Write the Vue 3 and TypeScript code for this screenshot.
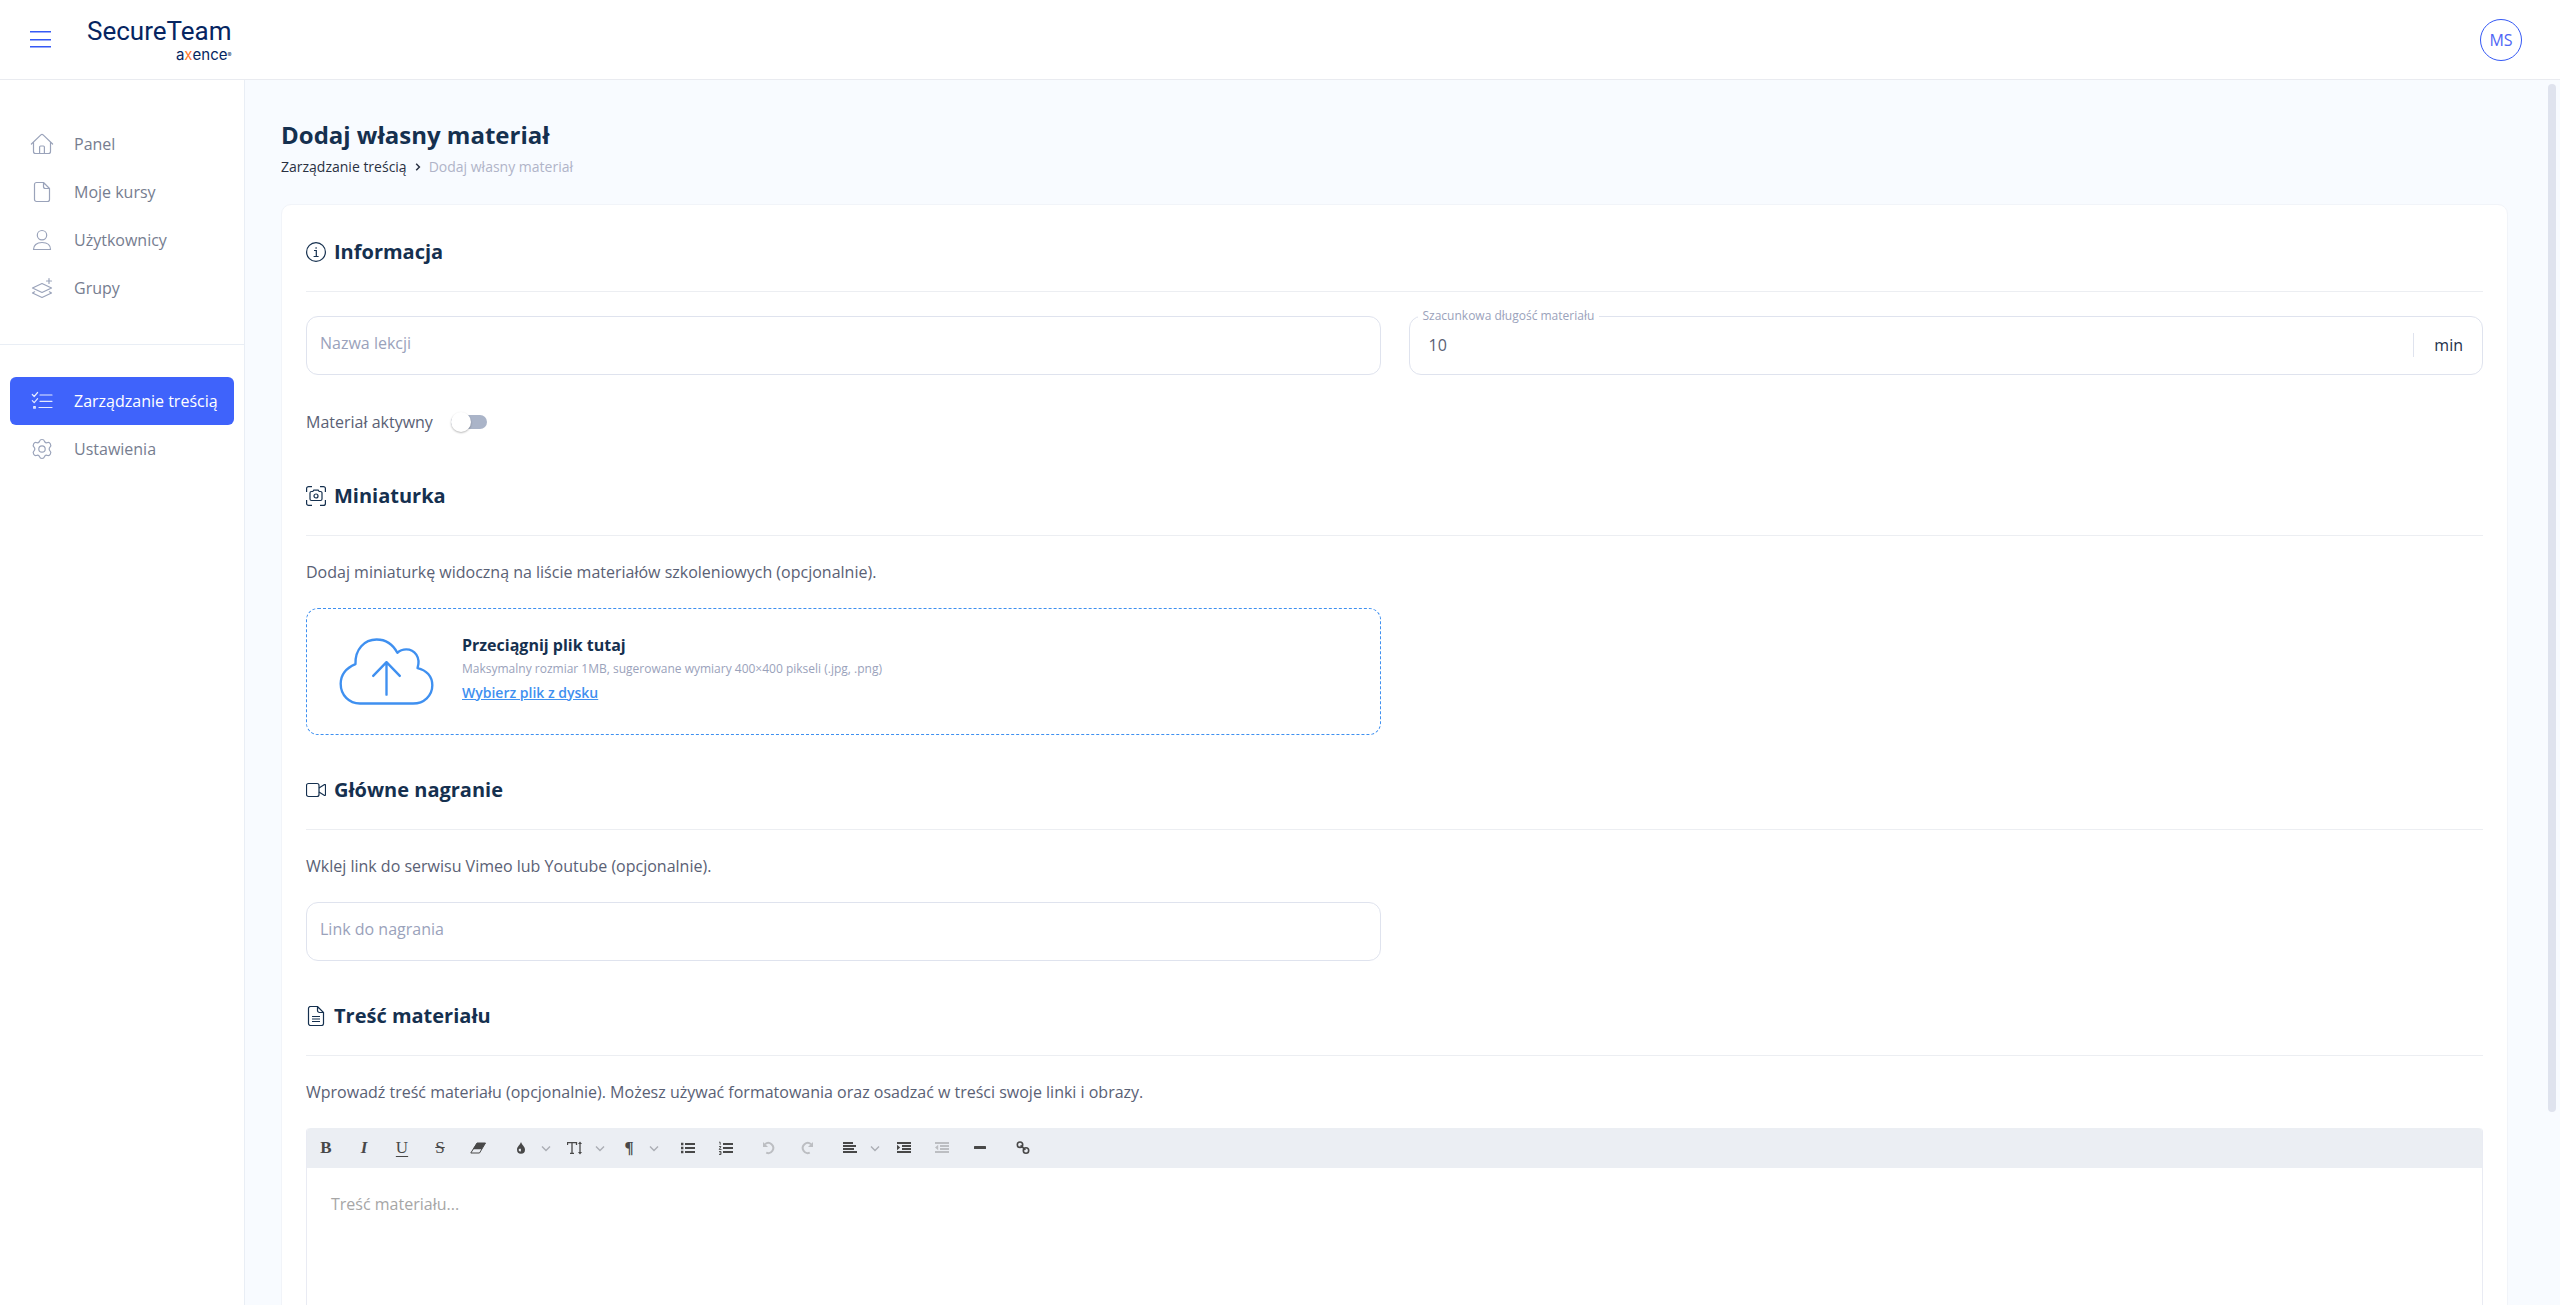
<script setup lang="ts">
import { ref } from 'vue'

interface NavItem {
  label: string
  icon: string
  active?: boolean
}

const mainNav: NavItem[] = [
  { label: 'Panel', icon: 'home' },
  { label: 'Moje kursy', icon: 'file' },
  { label: 'Użytkownicy', icon: 'user' },
  { label: 'Grupy', icon: 'layers' },
]

const adminNav: NavItem[] = [
  { label: 'Zarządzanie treścią', icon: 'checklist', active: true },
  { label: 'Ustawienia', icon: 'gear' },
]

const navIcons: Record<string, string> = {
  home: 'M1.4 12 10.9 2.9a1.6 1.6 0 0 1 2.2 0L22.6 12M3.5 10.2V19.5a2 2 0 0 0 2 2h13a2 2 0 0 0 2-2V10.2M9.6 21.5V15a1 1 0 0 1 1-1h2.8a1 1 0 0 1 1 1v6.5',
  file: 'M6.5 2.5h7l6 6v11a2 2 0 0 1-2 2h-11a2 2 0 0 1-2-2v-15a2 2 0 0 1 2-2zM13.5 2.5v4a2 2 0 0 0 2 2h4',
  user: 'M12 2.5a4.7 4.7 0 1 1 0 9.4a4.7 4.7 0 0 1 0-9.4zM3.5 21.5h17c0-4.2-3-7-8.500-7s-8.500 2.800-8.500 7z',
  layers: 'M12 7.500l9.500 4.500-9.500 4.500L2.500 12zM4.600 15.800 2.500 17l9.500 4.500 9.500-4.500-2.100-1.200M19 2.500v5M16.500 5h5',
  checklist: 'M10 6h12M10 12.300h12M9 18.500h13M2.300 5.500 4.200 7.500 7.600 3.500M2.300 11.700 4.200 13.700 7.600 9.700M3.700 17.600h1.600v1.600H3.700z',
  gear: 'M12 2.500C13.900 2.500 14.200 3.200 14.500 4.300 14.900 5.500 15.900 6 17 5.700 18.400 5.200 19.300 5 20.300 6.700 21.400 8.600 21 9.200 20 10.100 18.900 11.200 18.900 12.800 20 13.900 21 14.800 21.400 15.400 20.300 17.300 19.300 19 18.400 18.800 17 18.300 15.900 18 14.900 18.500 14.500 19.700 14.200 20.800 13.900 21.500 12 21.500S9.800 20.800 9.500 19.700C9.100 18.500 8.100 18 7 18.300 5.600 18.800 4.700 19 3.700 17.300 2.600 15.400 3 14.800 4 13.900 5.100 12.800 5.100 11.200 4 10.100 3 9.200 2.600 8.600 3.700 6.700 4.700 5 5.600 5.200 7 5.700 8.100 6 9.100 5.500 9.500 4.300 9.800 3.200 10.100 2.500 12 2.500zM12 8.800a3.200 3.200 0 1 1 0 6.400a3.200 3.200 0 0 1 0-6.400z',
}

interface Tool {
  name: string
  glyph: string
  letter?: string
  menu?: boolean
  disabled?: boolean
}

const toolGroups: Tool[][] = [
  [
    { name: 'Pogrubienie', letter: 'B', glyph: 'bold' },
    { name: 'Kursywa', letter: 'I', glyph: 'italic' },
    { name: 'Podkreślenie', letter: 'U', glyph: 'underline' },
    { name: 'Przekreślenie', letter: 'S', glyph: 'strike' },
    { name: 'Wyczyść formatowanie', glyph: 'eraser' },
  ],
  [
    { name: 'Kolor', glyph: 'drop', menu: true },
    { name: 'Rozmiar czcionki', glyph: 'size', menu: true },
    { name: 'Format akapitu', letter: '¶', glyph: 'para', menu: true },
  ],
  [
    { name: 'Lista punktowana', glyph: 'ul' },
    { name: 'Lista numerowana', glyph: 'ol' },
  ],
  [
    { name: 'Cofnij', glyph: 'undo', disabled: true },
    { name: 'Ponów', glyph: 'redo', disabled: true },
  ],
  [
    { name: 'Wyrównanie', glyph: 'align', menu: true },
    { name: 'Zwiększ wcięcie', glyph: 'indent' },
    { name: 'Zmniejsz wcięcie', glyph: 'outdent', disabled: true },
    { name: 'Linia pozioma', glyph: 'hr' },
  ],
  [{ name: 'Wstaw link', glyph: 'link' }],
]

const lessonName = ref('')
const duration = ref('10')
const isActive = ref(false)
const videoLink = ref('')
const content = ref('')
</script>

<template>
  <div class="app">
    <header class="topbar">
      <button class="menu-button" type="button" aria-label="Menu">
        <svg width="21" height="17" viewBox="0 0 21 17"><path d="M0 .7h21M0 8.700h21M0 15.700h21" stroke="currentColor" stroke-width="1.4" /></svg>
      </button>
      <a class="logo" href="#">
        <span class="logo-name">SecureTeam</span>
        <span class="logo-brand">a<b>x</b>ence<small>®</small></span>
      </a>
      <button class="avatar" type="button">MS</button>
    </header>

    <div class="body">
      <nav class="sidebar">
        <div class="nav-group">
          <a v-for="item in mainNav" :key="item.label" class="nav-item" href="#">
            <svg class="nav-icon" viewBox="0 0 24 24"><path :d="navIcons[item.icon]" /></svg>
            <span>{{ item.label }}</span>
          </a>
        </div>
        <div class="nav-group">
          <a v-for="item in adminNav" :key="item.label" class="nav-item" :class="{ active: item.active }" href="#">
            <svg class="nav-icon" viewBox="0 0 24 24"><path :d="navIcons[item.icon]" /></svg>
            <span>{{ item.label }}</span>
          </a>
        </div>
      </nav>

      <main class="main">
        <h1>Dodaj własny materiał</h1>
        <div class="crumbs">
          <a href="#">Zarządzanie treścią</a>
          <svg width="6" height="8" viewBox="0 0 6 8"><path d="M1.200.800 4.400 4 1.200 7.200" fill="none" stroke="currentColor" stroke-width="1.500" /></svg>
          <span>Dodaj własny materiał</span>
        </div>

        <form class="card" @submit.prevent>
          <section>
            <h2>
              <svg viewBox="0 0 20 20"><circle cx="10" cy="10" r="9.400" /><path d="M8 8.500h2.300v6M7.600 14.500h5M10.100 5.200v1.600" /></svg>
              Informacja
            </h2>
            <div class="columns">
              <input v-model="lessonName" class="field" type="text" placeholder="Nazwa lekcji" aria-label="Nazwa lekcji" />
              <div class="field duration">
                <label for="duration">Szacunkowa długość materiału</label>
                <input id="duration" v-model="duration" type="text" />
                <span class="unit">min</span>
              </div>
            </div>
            <div class="toggle-row">
              <label for="active">Materiał aktywny</label>
              <input id="active" v-model="isActive" class="switch" type="checkbox" role="switch" />
            </div>
          </section>

          <section>
            <h2>
              <svg viewBox="0 0 20 20"><path d="M.6 6V2.600a2 2 0 0 1 2-2H6M14 .6h3.400a2 2 0 0 1 2 2V6M19.400 14v3.400a2 2 0 0 1-2 2H14M6 19.400H2.600a2 2 0 0 1-2-2V14M5.500 5.500h1.300l1-1.400h4.400l1 1.400h1.300a1.500 1.500 0 0 1 1.500 1.500v6a1.500 1.500 0 0 1-1.500 1.500h-9A1.500 1.500 0 0 1 4 13V7a1.500 1.500 0 0 1 1.500-1.500z" /><circle cx="10" cy="10" r="2" /></svg>
              Miniaturka
            </h2>
            <p>Dodaj miniaturkę widoczną na liście materiałów szkoleniowych (opcjonalnie).</p>
            <div class="columns">
              <div class="dropzone">
                <svg class="cloud" viewBox="0 0 96 68"><path d="M21 66.500h54c11 0 19.500-8 19.500-18.500 0-9-6-15.500-15-17.500 3.500-11-3-19-11.500-19-4 0-6.500 1.200-9 3.500C54.500 6.500 47 1.500 38 1.500c-12.500 0-22 10-21.500 25C7 30.500 1.500 37 1.500 46.500c0 11.500 8.500 20 19.500 20zM48 57.500V24.500M34.500 38.500 48 24.500l13.500 14" /></svg>
                <div class="drop-text">
                  <strong>Przeciągnij plik tutaj</strong>
                  <small>Maksymalny rozmiar 1MB, sugerowane wymiary 400×400 pikseli (.jpg, .png)</small>
                  <a href="#">Wybierz plik z dysku</a>
                </div>
              </div>
            </div>
          </section>

          <section>
            <h2>
              <svg viewBox="0 0 20 20"><rect x=".5" y="3.500" width="12.500" height="13" rx="2" /><path d="M13 8l5.500-3.400a.7.700 0 0 1 1 .6v9.600a.7.700 0 0 1-1 .6L13 12" /></svg>
              Główne nagranie
            </h2>
            <p>Wklej link do serwisu Vimeo lub Youtube (opcjonalnie).</p>
            <div class="columns">
              <input v-model="videoLink" class="field" type="text" placeholder="Link do nagrania" aria-label="Link do nagrania" />
            </div>
          </section>

          <section>
            <h2>
              <svg viewBox="0 0 20 20"><path d="M4.500.500h7l6 6v11a2 2 0 0 1-2 2h-11a2 2 0 0 1-2-2v-15a2 2 0 0 1 2-2zM11.500.500v4a2 2 0 0 0 2 2h4M6 10.500h8M6 13h8M6 15.500h8" /></svg>
              Treść materiału
            </h2>
            <p>Wprowadź treść materiału (opcjonalnie). Możesz używać formatowania oraz osadzać w treści swoje linki i obrazy.</p>
            <div class="editor">
              <div class="toolbar" role="toolbar">
                <div v-for="(group, g) in toolGroups" :key="g" class="tool-group">
                  <template v-for="tool in group" :key="tool.name">
                    <button type="button" class="tool" :class="tool.glyph" :disabled="tool.disabled" :aria-label="tool.name">
                      <template v-if="tool.letter">{{ tool.letter }}</template>
                      <svg v-else viewBox="0 0 16 16">
                        <template v-if="tool.glyph === 'eraser'">
                          <path d="M7 3h8.500L9.500 13H.8z" fill="none" stroke="currentColor" />
                          <path d="M7 3h8.500L11.700 9.300H2.800z" fill="currentColor" />
                        </template>
                        <path v-else-if="tool.glyph === 'drop'" fill-rule="evenodd" d="M8 2c.9 3 4 4.400 4 7.800a4 4 0 0 1-8 0C4 6.400 7.100 5 8 2zM6.300 8.800a1.300 1.300 0 1 0 1.600 2.400V8.800z" fill="currentColor" />
                        <template v-else-if="tool.glyph === 'size'">
                          <path d="M.5 5V2.600h9V5M5 2.600v10.800M3 13.400h4" fill="none" stroke="currentColor" stroke-width="1.300" />
                          <path d="M13 3.500v9" stroke="currentColor" stroke-width="1.300" />
                          <path d="M13 1.500l2 2.600h-4zM13 14.500l2-2.600h-4z" fill="currentColor" />
                        </template>
                        <path v-else-if="tool.glyph === 'ul'" d="M5 3h10v2H5zM5 7h10v2H5zM5 11h10v2H5zM1 2.800h2.400v2.400H1zM1 6.800h2.400v2.400H1zM1 10.800h2.400v2.400H1z" fill="currentColor" />
                        <template v-else-if="tool.glyph === 'ol'">
                          <path d="M5 3h10v2H5zM5 7h10v2H5zM5 11h10v2H5z" fill="currentColor" />
                          <path d="M1 2.200h1.200v2.600M1 6.500h2L1.200 9.500H3.500M1 11.500h2v3H1M1.500 13H3" fill="none" stroke="currentColor" stroke-width=".9" />
                        </template>
                        <g v-else-if="tool.glyph === 'undo'">
                          <path d="M4 4.200A5 5 0 1 1 5.200 12.600" fill="none" stroke="currentColor" stroke-width="2" /><path d="M2 2v5h5z" fill="currentColor" />
                        </g>
                        <g v-else-if="tool.glyph === 'redo'">
                          <path d="M12 4.200A5 5 0 1 0 10.800 12.600" fill="none" stroke="currentColor" stroke-width="2" /><path d="M14 2v5H9z" fill="currentColor" />
                        </g>
                        <path v-else-if="tool.glyph === 'align'" d="M1 2h10v2H1zM1 5h13v2H1zM1 8h11v2H1zM1 11h14v2H1z" fill="currentColor" />
                        <path v-else-if="tool.glyph === 'indent'" d="M1 2h14v2H1zM6 5h9v2H6zM6 8h9v2H6zM1 11h14v2H1zM1 4.800v5.400l3.200-2.700z" fill="currentColor" />
                        <path v-else-if="tool.glyph === 'outdent'" d="M1 2h14v2H1zM6 5h9v2H6zM6 8h9v2H6zM1 11h14v2H1zM4.200 4.800v5.400L1 7.500z" fill="currentColor" />
                        <rect v-else-if="tool.glyph === 'hr'" x="2" y="6" width="12" height="3" rx=".6" fill="currentColor" />
                        <g v-else fill="none" stroke="currentColor" stroke-width="1.600">
                          <circle cx="5" cy="4.700" r="2.700" /><circle cx="11" cy="10.500" r="2.700" /><path d="M5.600 5.300l4.800 4.600" />
                        </g>
                      </svg>
                    </button>
                    <svg v-if="tool.menu" class="chevron" viewBox="0 0 12 12"><path d="M2 4.500l4 4 4-4" /></svg>
                  </template>
                </div>
              </div>
              <textarea v-model="content" placeholder="Treść materiału..." aria-label="Treść materiału"></textarea>
            </div>
          </section>
        </form>
      </main>
      <div class="scroll-thumb"></div>
    </div>
  </div>
</template>

<style>
body {
  overflow: hidden;
  background: #f8fbff;
}
</style>

<style scoped>
*,
*::before {
  box-sizing: border-box;
}

.app {
  display: flex;
  flex-direction: column;
  height: 100vh;
  font: 16px/24px 'Open Sans', 'Noto Sans', sans-serif;
  color: #5a6175;
}

a {
  color: inherit;
  text-decoration: none;
}

button,
input,
textarea {
  font: inherit;
  color: inherit;
  outline: none;
}

button {
  padding: 0;
  border: 0;
  background: none;
}

.topbar {
  display: flex;
  flex: none;
  align-items: center;
  height: 80px;
  padding: 0 38px 0 30px;
  border-bottom: 1px solid #e9ebf0;
  background: #fff;
}

.menu-button {
  display: flex;
  margin-right: 36px;
  color: #3559f5;
}

.logo {
  display: flex;
  flex-direction: column;
  align-items: flex-end;
  font-family: Roboto, sans-serif;
  color: #062561;
}

.logo-name {
  font-size: 26px;
  line-height: 30px;
}

.logo-brand {
  display: flex;
  font-family: Inter, sans-serif;
  font-size: 15px;
  line-height: 18px;
}

.logo-brand b {
  font-weight: 400;
  color: #ff7a2e;
}

.logo-brand small {
  font-size: 6px;
  line-height: 18px;
}

.avatar {
  width: 42px;
  height: 42px;
  margin-left: auto;
  border: 1px solid #3559f5;
  border-radius: 50%;
  color: #4f66f5;
}

.body {
  position: relative;
  display: flex;
  flex: 1;
  min-height: 0;
}

.sidebar {
  flex: none;
  width: 245px;
  padding-top: 8px;
  border-right: 1px solid #e9eef5;
  background: #fff;
}

.nav-group {
  padding: 32px 10px;
}

.nav-group + .nav-group {
  border-top: 1px solid #e9eef5;
}

.nav-item {
  display: flex;
  align-items: center;
  gap: 20px;
  height: 48px;
  padding: 0 20px;
  border-radius: 6px;
  color: #767d90;
  white-space: nowrap;
}

.nav-item.active {
  padding-right: 0;
  background: #3f63fb;
  color: #fff;
}

.nav-icon {
  flex: none;
  width: 24px;
  height: 24px;
  fill: none;
  stroke: #9aa3ba;
  stroke-width: 1.2;
  stroke-linecap: round;
  stroke-linejoin: round;
}

.active .nav-icon {
  stroke: #e4eaff;
}

.main {
  flex: 1;
  min-width: 0;
  padding: 39px 52px 40px 36px;
  overflow: hidden;
  background: #f8fbff;
}

.scroll-thumb {
  position: absolute;
  top: 4px;
  right: 4px;
  bottom: 193px;
  width: 8px;
  border-radius: 4px;
  background: #dfe3ee;
}

h1 {
  margin: 0;
  font-size: 24px;
  line-height: 32px;
  font-weight: 700;
  color: #15304f;
}

.crumbs {
  display: flex;
  align-items: center;
  gap: 8px;
  margin: 6px 0 27px;
  font-size: 14px;
  line-height: 20px;
  color: #b0b4c8;
}

.crumbs a,
.crumbs svg {
  color: #2a3142;
}

.card {
  padding: 32px 24px 40px;
  border: 1px solid #f1f4f9;
  border-radius: 10px;
  background: #fff;
}

section + section {
  margin-top: 40px;
}

h2 {
  display: flex;
  align-items: center;
  gap: 8px;
  margin: 0 0 24px;
  padding-bottom: 24px;
  border-bottom: 1px solid #eceef2;
  font-size: 20px;
  line-height: 30px;
  font-weight: 700;
  color: #15304f;
}

h2 svg {
  width: 20px;
  height: 20px;
  fill: none;
  stroke: currentColor;
  stroke-width: 1.2;
}

p {
  margin: 0 0 24px;
}

.columns {
  display: grid;
  grid-template-columns: 1fr 1fr;
  gap: 28px;
}

.field {
  width: 100%;
  height: 59px;
  padding: 0 13px 6px;
  border: 1px solid #dfe3ee;
  border-radius: 12px;
  background: #fff;
}

.field::placeholder {
  color: #9aa2bb;
  opacity: 1;
}

.duration {
  position: relative;
  display: flex;
  align-items: center;
  padding: 0 19px 2px;
}

.duration label {
  position: absolute;
  top: -9px;
  left: 8px;
  padding: 0 5px;
  background: #fff;
  font-size: 12px;
  line-height: 16px;
  color: #9aa2bb;
}

.duration input {
  flex: 1;
  min-width: 0;
  padding: 0;
  border: 0;
  background: none;
}

.unit {
  padding-left: 20px;
  border-left: 1px solid #dfe3ee;
  color: #24324a;
}

.toggle-row {
  display: flex;
  align-items: center;
  gap: 18px;
  height: 38px;
  margin-top: 28px;
}

.switch {
  display: flex;
  align-items: center;
  width: 36px;
  height: 14px;
  margin: 0;
  border-radius: 7px;
  background: #aab4c8;
  appearance: none;
}

.switch::before {
  width: 20px;
  height: 20px;
  border-radius: 50%;
  background: #fff;
  box-shadow: 0 1px 2px rgba(0, 0, 0, 0.28);
  content: '';
}

.switch:checked {
  justify-content: flex-end;
  background: #3f63fb;
}

.dropzone {
  display: flex;
  align-items: center;
  gap: 28px;
  height: 127px;
  padding: 0 32px;
  border: 1px dashed #3f90f0;
  border-radius: 12px;
}

.cloud {
  width: 95px;
  height: 67px;
  fill: none;
  stroke: #3f90f0;
  stroke-width: 2.4;
  stroke-linejoin: round;
  stroke-linecap: round;
}

.drop-text {
  display: flex;
  flex-direction: column;
  align-items: flex-start;
  padding-bottom: 6px;
  line-height: 24px;
}

.drop-text strong {
  font-weight: 700;
  color: #15304f;
}

.drop-text small {
  font-size: 12px;
  color: #9aa2bb;
}

.drop-text a {
  font-size: 14px;
  font-weight: 600;
  color: #3f90f0;
  text-decoration: underline;
}

.editor {
  border: 1px solid #e9ebf3;
  border-top: 0;
  border-radius: 4px;
}

.toolbar {
  display: flex;
  gap: 5px;
  height: 40px;
  border-radius: 4px 4px 0 0;
  background: #ebeef3;
}

.tool-group {
  display: flex;
  align-items: center;
}

.tool {
  display: flex;
  align-items: center;
  justify-content: center;
  width: 38px;
  height: 40px;
  font: 17px/20px 'Liberation Serif', serif;
  color: #484848;
}

.tool svg {
  width: 16px;
  height: 16px;
}

.tool:disabled {
  color: #bcbec2;
}

.bold {
  font-weight: 700;
}

.italic {
  font-style: italic;
  font-weight: 700;
}

.underline {
  text-decoration: underline;
  text-underline-offset: 3px;
}

.strike {
  text-decoration: line-through;
}

.para {
  font-weight: 700;
}

.chevron {
  width: 12px;
  height: 12px;
  margin-right: 4px;
  fill: none;
  stroke: #abaeb4;
  stroke-width: 1.4;
}

textarea {
  display: block;
  width: 100%;
  height: 320px;
  padding: 24px;
  border: 0;
  background: #fff;
  resize: none;
}

textarea::placeholder {
  color: #a6a6a6;
  opacity: 1;
}
</style>
